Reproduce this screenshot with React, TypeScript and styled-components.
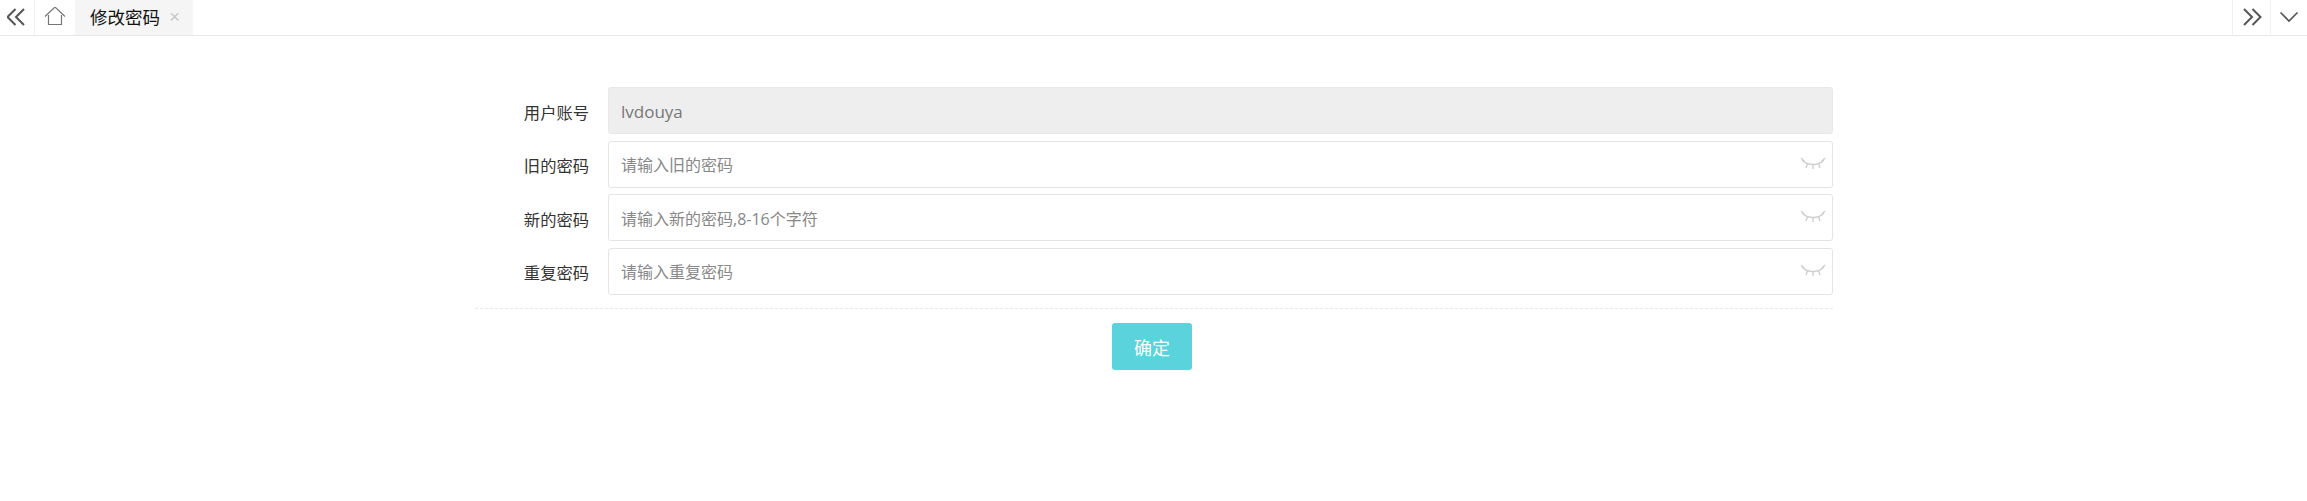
import React from "react"
import styled, { createGlobalStyle } from "styled-components"

const GlobalStyle = createGlobalStyle`
  html, body {
    margin: 0;
    padding: 0;
    background: #fff;
    font-family: "Open Sans", "Noto Sans CJK SC", sans-serif;
  }
`

const fields = [
  { label: "用户账号", value: "lvdouya", disabled: true },
  { label: "旧的密码", placeholder: "请输入旧的密码" },
  { label: "新的密码", placeholder: "请输入新的密码,8-16个字符" },
  { label: "重复密码", placeholder: "请输入重复密码" },
]

const EyeClosed = () => (
  <EyeSvg viewBox="0 0 26 14" fill="none" stroke="#cfcfcf" strokeWidth="1.4">
    <path d="M2 4c3 3 7 4.500 11 4.500S21 7 24 4" />
    <path d="M1 2l3.500 3.500M7.500 7.500L6 12M13 8.500v4.500M18.500 7.500l1.500 4.500M21.500 5.500L25 2" />
  </EyeSvg>
)

const App: React.FC = () => {
  return (
    <Page>
      <GlobalStyle />
      <TabBar>
        <TabCell $width={35} $border>
          <svg width="20" height="18" viewBox="0 0 20 18" fill="none" stroke="#555" strokeWidth="2">
            <path d="M8.500 1L.5 9l8 8M17 1L9 9l8 8" />
          </svg>
        </TabCell>
        <TabCell $width={40}>
          <svg width="22" height="20" viewBox="0 1 22 20" fill="none" stroke="#777" strokeWidth="1.2">
            <path d="M1 10.500L11 1l10 9.500" />
            <path d="M4.500 9v9.500h13V9" />
          </svg>
        </TabCell>
        <Tab>
          修改密码
          <TabClose>×</TabClose>
        </Tab>
        <TabSpacer />
        <TabCell $width={38} $borderLeft>
          <svg width="20" height="18" viewBox="0 0 20 18" fill="none" stroke="#555" strokeWidth="2">
            <path d="M2 1l8 8-8 8M10.500 1l8 8-8 8" />
          </svg>
        </TabCell>
        <TabCell $width={37} $borderLeft>
          <svg width="20" height="12" viewBox="0 0 20 12" fill="none" stroke="#555" strokeWidth="1.6">
            <path d="M1.500 1.500L10 10l8.500-8.500" />
          </svg>
        </TabCell>
      </TabBar>
      <Form>
        <Rows>
          {fields.map((field) => (
            <Row key={field.label}>
              <Label>{field.label}</Label>
              <InputWrap>
                <Input
                  readOnly
                  disabled={field.disabled}
                  value={field.value}
                  placeholder={field.placeholder}
                />
                {!field.disabled && <EyeClosed />}
              </InputWrap>
            </Row>
          ))}
        </Rows>
        <Footer>
          <Button type="button">确定</Button>
        </Footer>
      </Form>
    </Page>
  )
}

const Page = styled.div`
  width: 2307px;
  height: 501px;
  overflow: hidden;
  background: #fff;
`

const TabBar = styled.div`
  display: flex;
  height: 35px;
  border-bottom: 1px solid #e8e8e8;
`

const TabCell = styled.div<{ $width: number; $border?: boolean; $borderLeft?: boolean }>`
  display: flex;
  align-items: center;
  justify-content: center;
  width: ${(p) => p.$width}px;
  box-sizing: border-box;
  padding-bottom: 2px;
  border-right: ${(p) => (p.$border ? "1px solid #f0f0f0" : "none")};
  border-left: ${(p) => (p.$borderLeft ? "1px solid #f0f0f0" : "none")};
`

const Tab = styled.div`
  display: flex;
  align-items: center;
  width: 118px;
  box-sizing: border-box;
  padding: 0 0 2px 15px;
  background: #f5f5f5;
  color: #111;
  font-size: 17.5px;
`

const TabClose = styled.span`
  margin-left: 9px;
  color: #c8c8c8;
  font-size: 19px;
  font-family: "Liberation Sans", sans-serif;
`

const TabSpacer = styled.div`
  flex: 1;
`

const Form = styled.div`
  width: 1358px;
  margin: 51px 0 0 475px;
`

const Rows = styled.div`
  display: flex;
  flex-direction: column;
  gap: 6.67px;
  padding-bottom: 13px;
  border-bottom: 1px dashed #e8e8e8;
`

const Row = styled.div`
  display: flex;
  align-items: center;
  height: 47px;
`

const Label = styled.label`
  width: 114px;
  margin-right: 19px;
  padding-top: 2px;
  text-align: right;
  color: #333;
  font-size: 16.3px;
`

const InputWrap = styled.div`
  position: relative;
  flex: 1;
  height: 100%;
`

const Input = styled.input`
  display: block;
  width: 100%;
  height: 100%;
  box-sizing: border-box;
  padding: 2px 12px 0;
  border: 1px solid #e4e4e4;
  border-radius: 3px;
  outline: none;
  background: #fff;
  color: #777;
  font-family: inherit;
  font-size: 16px;

  &::placeholder {
    color: #888;
    opacity: 1;
  }

  &:disabled {
    background: #eee;
    border-color: #e8e8e8;
    color: #777;
    font-size: 17px;
  }
`

const EyeSvg = styled.svg`
  position: absolute;
  top: 15px;
  right: 7px;
  width: 26px;
  height: 14px;
`

const Footer = styled.div`
  display: flex;
  justify-content: center;
  padding-top: 14px;
  padding-right: 4px;
`

const Button = styled.button`
  width: 80px;
  height: 47px;
  padding: 2px 0 0;
  border: none;
  border-radius: 3px;
  background: #5bd3dc;
  color: #fff;
  font-family: inherit;
  font-size: 18px;
`

export default App
